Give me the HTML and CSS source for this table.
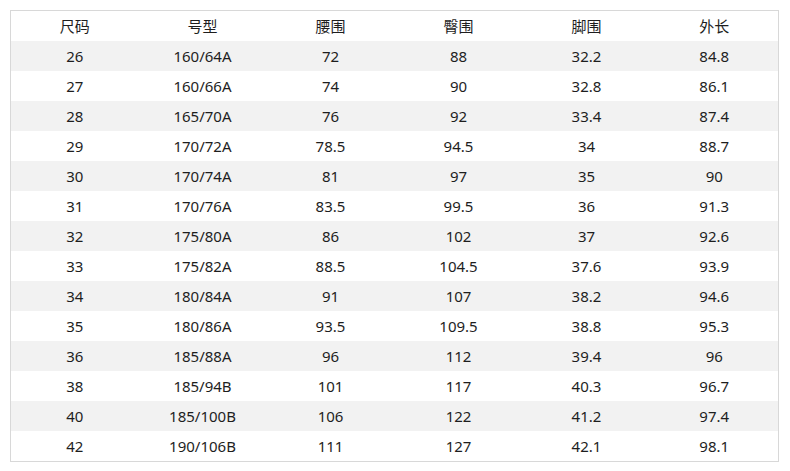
FILE: index.html
```html
<!DOCTYPE html>
<html lang="zh">
<head>
<meta charset="utf-8">
<link rel="stylesheet" href="styles.css">
</head>
<body>
<table class="size-table">
<thead>
<tr><th>尺码</th><th>号型</th><th>腰围</th><th>臀围</th><th>脚围</th><th>外长</th></tr>
</thead>
<tbody>
<tr><td>26</td><td>160/64A</td><td>72</td><td>88</td><td>32.2</td><td>84.8</td></tr>
<tr><td>27</td><td>160/66A</td><td>74</td><td>90</td><td>32.8</td><td>86.1</td></tr>
<tr><td>28</td><td>165/70A</td><td>76</td><td>92</td><td>33.4</td><td>87.4</td></tr>
<tr><td>29</td><td>170/72A</td><td>78.5</td><td>94.5</td><td>34</td><td>88.7</td></tr>
<tr><td>30</td><td>170/74A</td><td>81</td><td>97</td><td>35</td><td>90</td></tr>
<tr><td>31</td><td>170/76A</td><td>83.5</td><td>99.5</td><td>36</td><td>91.3</td></tr>
<tr><td>32</td><td>175/80A</td><td>86</td><td>102</td><td>37</td><td>92.6</td></tr>
<tr><td>33</td><td>175/82A</td><td>88.5</td><td>104.5</td><td>37.6</td><td>93.9</td></tr>
<tr><td>34</td><td>180/84A</td><td>91</td><td>107</td><td>38.2</td><td>94.6</td></tr>
<tr><td>35</td><td>180/86A</td><td>93.5</td><td>109.5</td><td>38.8</td><td>95.3</td></tr>
<tr><td>36</td><td>185/88A</td><td>96</td><td>112</td><td>39.4</td><td>96</td></tr>
<tr><td>38</td><td>185/94B</td><td>101</td><td>117</td><td>40.3</td><td>96.7</td></tr>
<tr><td>40</td><td>185/100B</td><td>106</td><td>122</td><td>41.2</td><td>97.4</td></tr>
<tr><td>42</td><td>190/106B</td><td>111</td><td>127</td><td>42.1</td><td>98.1</td></tr>
</tbody>
</table>
</body>
</html>
```
FILE: styles.css
```css
html, body {
  margin: 0;
  padding: 0;
  background: #ffffff;
}
body {
  padding: 10px 0 0 10px;
  font-family: "Noto Sans", "Noto Sans CJK SC", sans-serif;
  font-size: 15px;
  color: #1e1e1e;
}
.size-table {
  width: 769px;
  border-collapse: collapse;
  table-layout: fixed;
  border: 1px solid #d8d8d8;
}
.size-table th,
.size-table td {
  height: 30px;
  padding: 0;
  text-align: center;
  vertical-align: middle;
  font-weight: normal;
  line-height: 30px;
}
.size-table tbody tr:nth-child(odd) {
  background: #f2f2f2;
}
```
